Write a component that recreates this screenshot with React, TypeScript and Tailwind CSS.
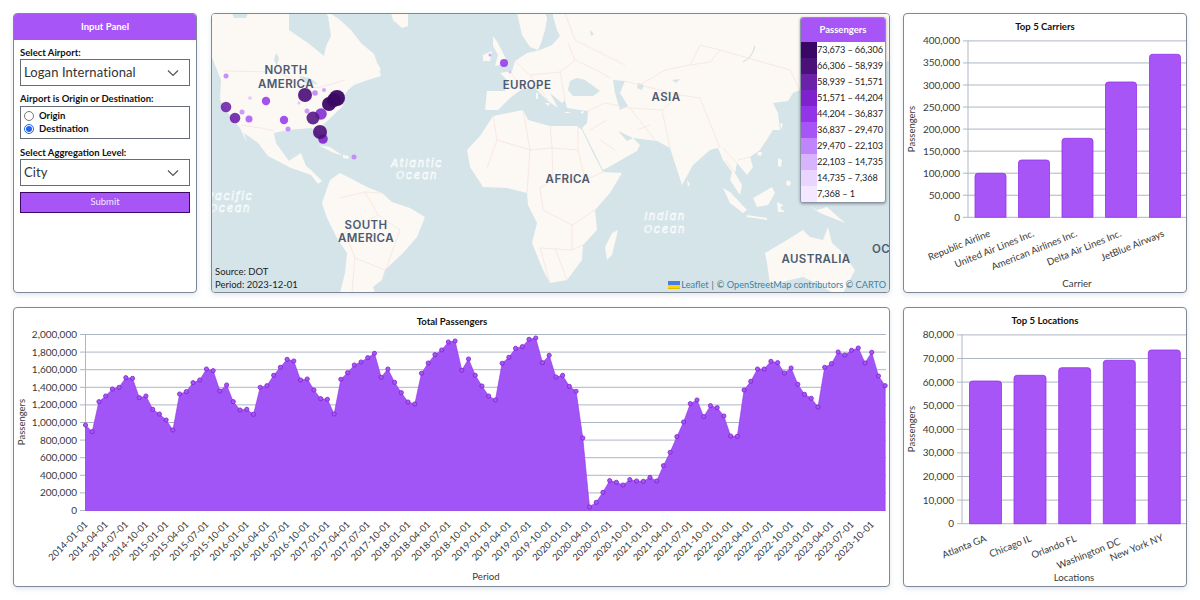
import React from 'react';

const PANEL = 'border border-[#7f8896] rounded-[4px] bg-white shadow-[0_2px_5px_rgba(120,140,170,0.22)] overflow-hidden';
const AXIS_TEXT = '#3a3a3a';
const GRID = '#aeb6c4';

// y position of each month, read off the plot (2014-01 .. 2023-12), in 1/3 px below y=300
const totalTrace = [
  375, 395, 305, 288, 267, 262, 233, 235, 293, 288, 328, 342,
  360, 390, 282, 275, 248, 240, 207, 212, 273, 255, 305, 330,
  328, 343, 262, 257, 226, 202, 178, 183, 240, 237, 270, 296,
  298, 342, 238, 218, 195, 186, 173, 160, 232, 207, 247, 278,
  306, 312, 220, 189, 164, 150, 126, 123, 211, 177, 226, 258,
  288, 300, 190, 172, 145, 140, 118, 114, 188, 166, 231, 226,
  259, 274, 414, 621, 607, 577, 542, 547, 555, 539, 543, 544,
  532, 543, 497, 457, 410, 366, 311, 300, 350, 317, 323, 348,
  408, 409, 270, 244, 207, 207, 184, 188, 219, 204, 253, 283,
  295, 321, 202, 191, 156, 165, 151, 144, 189, 157, 228, 257,
];

const legend = [
  ['#3b0764', '73,673 – 66,306'],
  ['#4c1079', '66,306 – 58,939'],
  ['#6b21a8', '58,939 – 51,571'],
  ['#7e22ce', '51,571 – 44,204'],
  ['#9333ea', '44,204 – 36,837'],
  ['#a855f7', '36,837 – 29,470'],
  ['#c084fc', '29,470 – 22,103'],
  ['#d8b4fe', '22,103 – 14,735'],
  ['#e9d5ff', '14,735 – 7,368'],
  ['#f3e8ff', '7,368 – 1'],
];

const bubbles: [number, number, number, string, number][] = [
  [226, 76, 2.5, '#c084fc', 0.9],
  [250, 98, 1.8, '#d8b4fe', 0.7],
  [299, 103, 1.5, '#d8b4fe', 0.7],
  [242, 112, 2.5, '#c084fc', 0.8],
  [249, 119, 3.5, '#a855f7', 0.85],
  [266, 101, 4.2, '#9333ea', 0.85],
  [284, 120, 4.2, '#9333ea', 0.85],
  [288, 129, 2.5, '#c084fc', 0.9],
  [307, 111, 2.5, '#c084fc', 0.8],
  [315, 93, 2.8, '#c084fc', 0.9],
  [324, 90, 2, '#c084fc', 0.7],
  [226, 107, 5.3, '#6b21a8', 0.88],
  [235, 118, 5.3, '#6b21a8', 0.9],
  [321, 114, 5.8, '#7e22ce', 0.85],
  [323, 139, 4.8, '#7e22ce', 0.9],
  [354, 157, 2.5, '#c084fc', 0.9],
  [313, 118, 6.5, '#581c87', 0.92],
  [320, 132, 7, '#4c1079', 0.92],
  [305, 95, 7, '#4c1079', 0.92],
  [329, 104, 7, '#3b0764', 0.95],
  [334, 100, 7, '#3b0764', 0.95],
  [337, 98, 8, '#3b0764', 0.95],
  [504, 63, 4, '#9333ea', 0.85],
  [490, 55, 1.5, '#c084fc', 0.7],
  [510, 72, 1.5, '#d8b4fe', 0.8],
];

const land = [
  // north and central america
  '211,13 330,13 340,20 351,30 361,43 374,54 379,68 381,76 368,80 354,85 348,90 341,100 343,106 323,125 326,138 323,141 316,130 311,128 288,130 274,133 276,143 289,161 301,153 306,166 311,170 322,181 318,184 311,175 291,168 268,156 258,143 244,133 247,143 240,128 228,113 220,100 221,80 211,55',
  // south america
  '340,173 330,180 322,203 327,218 338,240 347,253 345,273 340,293 375,293 373,287 382,280 385,270 403,253 417,237 425,217 410,208 392,202 382,193 367,187 350,178',
  // africa
  '467,150 480,136 493,116 523,110 528,120 550,126 577,126 582,130 593,153 603,172 622,173 610,193 595,210 597,230 583,245 582,260 567,280 550,283 543,270 532,243 537,223 528,205 527,193 507,188 483,187 470,167',
  // eurasia
  '553,13 553,16 557,30 560,36 552,45 540,50 527,53 515,61 512,71 500,73 508,81 505,91 487,91 485,110 498,110 510,98 522,89 535,88 548,101 558,108 550,93 562,103 565,100 567,108 580,110 588,111 587,123 582,128 603,170 607,168 637,151 640,145 633,138 627,141 618,131 633,138 657,141 670,148 682,185 693,165 710,150 718,148 723,160 732,172 730,180 740,195 742,185 735,173 737,163 747,175 753,167 750,157 760,150 773,130 780,130 778,113 773,103 788,101 793,93 800,90 830,90 890,60 890,13',
  // scandinavia
  '517,13 522,35 530,47 538,50 545,35 548,20 545,13',
  // uk + ireland
  '493,36 498,43 503,53 508,63 495,66 498,55 493,46',
  '483,55 492,51 490,61 483,61',
  // greenland, newfoundland
  '391,13 408,13 408,26 402,28 393,20',
  '372,66 378,64 381,70 375,72',
  // cuba + hispaniola
  '318,145 330,147 343,156 334,153',
  '343,155 349,156 348,159 343,158',
  // madagascar
  '618,230 612,233 605,247 607,260 612,255',
  // mediterranean islands
  '536,93 538,93 538,99 536,99',
  '545,103 550,103 548,106',
  '565,112 570,112 570,113 565,113',
  '580,112 584,111 583,114',
  // taiwan, hainan
  '780,123 783,124 781,130',
  '758,152 762,152 761,156 757,155',
  // sri lanka, sumatra, java, borneo, sulawesi, philippines
  '687,180 690,184 688,187',
  '723,188 730,192 747,210 743,213 730,203',
  '747,215 767,218 767,220 747,217',
  '753,198 772,187 775,193 768,205 757,207',
  '777,202 783,205 780,208 785,212 778,212',
  '778,158 782,160 781,167 778,166',
  '787,180 791,182 790,186 786,185',
  // new guinea + australia
  '808,205 817,210 827,207 845,223 830,217 820,213',
  '765,253 767,263 770,285 790,280 803,277 820,285 833,293 843,293 855,270 840,250 832,243 828,227 823,240 810,237 803,230 787,240',
];

const water = [
  '289,13 289,30 308,43 324,56 326,46 331,36 328,16 325,13',
  '570,81 577,78 585,80 600,91 593,96 573,96 568,90',
  '613,80 625,81 620,93 628,106 620,110 615,93',
  '638,83 644,85 642,90 637,88',
  '548,13 553,13 553,30 545,42 540,47 545,30',
  '232,13 248,13 246,18 234,18',
  '276,53 279,58 277,66 274,60',
  '299,76 310,78 318,84 305,83',
  '590,30 594,34 591,36',
  '672,80 680,79 676,83',
];

const borders = [
  'M224 71L278 72L300 84L318 88L345 80',
  'M241 125L261 128L274 131',
  'M289 161L295 155L300 153',
  'M340 198L365 192L378 215L345 232L338 240',
  'M365 192L382 193M378 215L400 230L382 280M345 232L355 258L352 293M355 258L385 270',
  'M493 116L497 140L487 168M497 140L530 150L527 193M530 150L523 110M530 150L552 148L550 126M552 148L578 150L578 126',
  'M552 148L553 180L540 188L543 210L572 225L595 210M578 150L585 180L553 180M585 180L603 172M572 225L572 250L540 248M572 250L583 245M540 248L550 283M555 248L567 280',
  'M510 71L520 85L535 88M515 61L530 75L560 72L575 60L568 43M530 75L548 100M560 72L565 100M575 60L600 72L610 78',
  'M588 111L605 103L630 108L655 140M630 108L662 110L670 148M662 110L680 95L700 98L720 148M680 95L640 85L625 81M640 85L665 70L690 65L710 62L720 50L790 70L800 90M720 50L700 45L690 65',
  'M725 160L735 173M738 160L750 157M723 148L737 163',
  'M565 13L575 40M575 40L605 55L625 65',
  'M607 120L590 130M615 150L600 140M637 130L650 125',
];

const totalTicks = Array.from({ length: 40 }, (_, i) => {
  const year = 2014 + Math.floor(i / 4);
  const month = ['01', '04', '07', '10'][i % 4];
  return `${year}-${month}-01`;
});

const fmt = (n: number) => n.toLocaleString('en-US');

const Chevron: React.FC = () => (
  <svg className="absolute right-[11px] top-1/2 -translate-y-1/2 pointer-events-none" width="12" height="7" viewBox="0 0 12 7" fill="none">
    <path d="M1 1l5 5 5-5" stroke="#555" strokeWidth="1.2" />
  </svg>
);

const Select: React.FC<{ value: string }> = ({ value }) => (
  <div className="relative">
    <select
      defaultValue={value}
      className="appearance-none block w-full h-[27px] border border-[#666d78] bg-white rounded-none pl-[3px] text-[13px] font-normal tracking-[0.1px] text-[#333] outline-none"
    >
      <option>{value}</option>
    </select>
    <Chevron />
  </div>
);

const InputPanel: React.FC = () => (
  <div className={`${PANEL} w-[184px] shrink-0 mr-px flex flex-col`}>
    <div className="h-[26px] bg-[#a855f7] flex items-center justify-center text-white text-[9.5px] font-bold">Input Panel</div>
    <div className="px-[6px] pt-[6px] text-[9.5px] font-bold text-[#111] flex flex-col">
      <label className="leading-[13px]">Select Airport:</label>
      <Select value="Logan International" />
      <label className="leading-[13px] mt-[6px] mb-px">Airport is Origin or Destination:</label>
      <div className="border border-[#666d78] h-[33px] pl-[3px] flex flex-col justify-center">
        <label className="flex items-center gap-[5px] h-[13px]">
          <input type="radio" name="od" readOnly className="m-0 w-[10px] h-[10px] accent-[#2563eb]" />
          Origin
        </label>
        <label className="flex items-center gap-[5px] h-[13px]">
          <input type="radio" name="od" defaultChecked className="m-0 w-[10px] h-[10px] accent-[#2563eb]" />
          Destination
        </label>
      </div>
      <label className="leading-[13px] mt-[7px]">Select Aggregation Level:</label>
      <Select value="City" />
      <button className="mt-[6px] h-[21px] bg-[#a855f7] border border-[#3b0764] text-[#f3e8ff] text-[9.5px] font-normal">Submit</button>
    </div>
  </div>
);

const MapLabel: React.FC<{ x: number; y: number; children: string; anchor?: 'middle' | 'start' }> = ({ x, y, children, anchor = 'middle' }) => (
  <text x={x} y={y} textAnchor={anchor} fontFamily="Inter, sans-serif" fontWeight={600} fontSize={11.5} letterSpacing={0.4} fill="#4c5b70">
    {children}
  </text>
);

const OceanLabel: React.FC<{ x: number; y: number; children: string }> = ({ x, y, children }) => (
  <text
    x={x}
    y={y}
    textAnchor="middle"
    fontFamily="Inter, sans-serif"
    fontStyle="italic"
    fontSize={11}
    letterSpacing={1.6}
    fill="#cfe0e5"
    stroke="#ffffff"
    strokeWidth={0.6}
  >
    {children}
  </text>
);

const MapPanel: React.FC = () => (
  <div className={`${PANEL} relative flex-1`}>
    <svg className="block w-full h-full" viewBox="212 14 677 278">
      <rect x="200" y="0" width="700" height="300" fill="#d4e4e9" />
      {land.map((pts, i) => (
        <polygon key={i} points={pts} fill="#fcf8f4" strokeLinejoin="round" />
      ))}
      {water.map((pts, i) => (
        <polygon key={i} points={pts} fill="#d4e4e9" />
      ))}
      <path d="M743 62Q752 58 755 46" fill="none" stroke="#c9e0d8" strokeWidth="1" />
      {borders.map((d, i) => (
        <path key={i} d={d} fill="none" stroke="#f3e2da" strokeWidth="0.7" />
      ))}
      <MapLabel x={286} y={74}>NORTH</MapLabel>
      <MapLabel x={286} y={88}>AMERICA</MapLabel>
      <MapLabel x={527} y={89}>EUROPE</MapLabel>
      <MapLabel x={666} y={101}>ASIA</MapLabel>
      <MapLabel x={568} y={183}>AFRICA</MapLabel>
      <MapLabel x={366} y={229}>SOUTH</MapLabel>
      <MapLabel x={366} y={242}>AMERICA</MapLabel>
      <MapLabel x={816} y={263}>AUSTRALIA</MapLabel>
      <MapLabel x={872} y={253} anchor="start">OC</MapLabel>
      <OceanLabel x={417} y={167}>Atlantic</OceanLabel>
      <OceanLabel x={417} y={179}>Ocean</OceanLabel>
      <OceanLabel x={665} y={220}>Indian</OceanLabel>
      <OceanLabel x={665} y={233}>Ocean</OceanLabel>
      <OceanLabel x={230} y={200}>Pacific</OceanLabel>
      <OceanLabel x={230} y={212}>Ocean</OceanLabel>
      {bubbles.map(([cx, cy, r, fill, opacity], i) => (
        <circle key={i} cx={cx} cy={cy} r={r} fill={fill} fillOpacity={opacity} />
      ))}
    </svg>

    {/* Legend */}
    <div className="absolute top-[3px] right-[3px] w-[86px] border border-[#8b95a5] rounded-[3px] bg-white overflow-hidden shadow-[0_1px_3px_rgba(0,0,0,0.35)]">
      <div className="h-[24px] bg-[#a855f7] flex items-center justify-center text-white text-[9.5px] font-bold">Passengers</div>
      {legend.map(([color, label]) => (
        <div key={label} className="flex items-center h-[16px]">
          <span className="w-[16px] h-full shrink-0" style={{ backgroundColor: color }} />
          <span className="text-[9.2px] tracking-[-0.1px] text-[#222] whitespace-nowrap">{label}</span>
        </div>
      ))}
    </div>

    <div className="absolute left-[3px] bottom-[1px] text-[9.5px] leading-[13px] text-[#222]">
      <div>Source: DOT</div>
      <div>Period: 2023-12-01</div>
    </div>

    <div className="absolute right-[3px] bottom-[1px] flex items-center text-[9.2px] leading-[13px] text-[#4a6a78]">
      <svg className="mr-[1px]" width="12" height="8" viewBox="0 0 12 8">
        <rect width="12" height="4" fill="#4C7BE1" />
        <rect y="4" width="12" height="3" fill="#FFD500" />
        <rect y="7" width="12" height="1" fill="#E0BC00" />
      </svg>
      <span className="text-[#3b83a3]">Leaflet</span>
      <span className="mx-[3px]">|</span>
      <span>
        © <span className="text-[#3b83a3]">OpenStreetMap</span> <span className="text-[#3b83a3]">contributors</span> © <span className="text-[#3b83a3]">CARTO</span>
      </span>
    </div>
  </div>
);

type BarChartProps = {
  box: [number, number, number, number];
  title: string;
  titleX: number;
  titleY: number;
  axisX: number;
  zeroY: number;
  step: number;
  ticks: number[];
  bars: { name: string; x: number; w: number; top: number; endX: number; endY: number }[];
  yLabelY: number;
  xLabel: string;
  xLabelX: number;
  xLabelY: number;
};

const BarChart: React.FC<BarChartProps> = ({ box, title, titleX, titleY, axisX, zeroY, step, ticks, bars, yLabelY, xLabel, xLabelX, xLabelY }) => (
  <div className={`${PANEL} w-[284px] shrink-0`}>
    <svg className="block w-full h-full" viewBox={box.join(' ')} fontFamily="Lato, sans-serif">
      <text x={titleX} y={titleY} textAnchor="middle" fontSize={9.6} fontWeight={700} fill="#111">{title}</text>
      {ticks.map((t, i) => {
        const y = zeroY - step * i;
        return (
          <g key={t}>
            <line x1={axisX - 5} x2={1186} y1={y} y2={y} stroke={GRID} strokeWidth="1" />
            <text x={axisX - 8} y={y + 3.5} textAnchor="end" fontSize={10} fill={AXIS_TEXT}>{fmt(t)}</text>
          </g>
        );
      })}
      <line x1={axisX} x2={axisX} y1={zeroY - step * (ticks.length - 1)} y2={zeroY} stroke={GRID} />
      {bars.map((b) => (
        <g key={b.name}>
          <path
            d={`M${b.x} ${zeroY}V${b.top + 3}Q${b.x} ${b.top} ${b.x + 3} ${b.top}H${b.x + b.w - 3}Q${b.x + b.w} ${b.top} ${b.x + b.w} ${b.top + 3}V${zeroY}Z`}
            fill="#a855f7"
            stroke="#9333ea"
            strokeWidth="0.8"
          />
          <text x={b.endX} y={b.endY} textAnchor="end" fontSize={9.7} fill={AXIS_TEXT} transform={`rotate(-22 ${b.endX} ${b.endY})`}>{b.name}</text>
        </g>
      ))}
      <text x={915} y={yLabelY} textAnchor="middle" fontSize={9.5} fill={AXIS_TEXT} transform={`rotate(-90 915 ${yLabelY})`}>Passengers</text>
      <text x={xLabelX} y={xLabelY} textAnchor="middle" fontSize={9.7} fill={AXIS_TEXT}>{xLabel}</text>
    </svg>
  </div>
);

const TotalChart: React.FC = () => {
  const axisX = 85.5;
  const dx = 6.72;
  const zeroY = 510.5;
  const points = totalTrace.map((v, i) => [axisX + i * dx, 300 + v / 3]);
  const line = points.map(([x, y]) => `${x.toFixed(1)} ${y.toFixed(1)}`).join('L');
  return (
    <div className={`${PANEL} flex-1`}>
      <svg className="block w-full h-full" viewBox="14 308 875 278" fontFamily="Lato, sans-serif">
        <text x={452} y={325} textAnchor="middle" fontSize={9.6} fontWeight={700} fill="#111">Total Passengers</text>
        {Array.from({ length: 11 }, (_, i) => {
          const y = zeroY - 17.6 * i;
          return (
            <g key={i}>
              <line x1={80} x2={886} y1={y} y2={y} stroke={GRID} strokeWidth="1" />
              <text x={77} y={y + 3.5} textAnchor="end" fontSize={10} fill={AXIS_TEXT}>{fmt(i * 200000)}</text>
            </g>
          );
        })}
        <line x1={axisX} x2={axisX} y1={334.5} y2={zeroY} stroke={GRID} />
        <path d={`M${axisX} ${zeroY}L${line}L${points[119][0]} ${zeroY}Z`} fill="#a155f6" stroke="#9333ea" strokeWidth="0.6" />
        {points.map(([x, y], i) => (
          <circle key={i} cx={x} cy={y} r="2.1" fill="#a855f7" stroke="#7e22ce" strokeWidth="0.8" />
        ))}
        {totalTicks.map((label, i) => {
          const x = axisX + i * 3 * dx + 3;
          return (
            <text key={label} x={x} y={525} textAnchor="end" fontSize={9.5} fill={AXIS_TEXT} transform={`rotate(-45 ${x} 525)`}>{label}</text>
          );
        })}
        <text x={25} y={422} textAnchor="middle" fontSize={9.5} fill={AXIS_TEXT} transform="rotate(-90 25 422)">Passengers</text>
        <text x={486} y={580} textAnchor="middle" fontSize={9.7} fill={AXIS_TEXT}>Period</text>
      </svg>
    </div>
  );
};

const App: React.FC = () => (
  <div className="w-[1200px] h-[600px] bg-white p-[13px] flex flex-col gap-[14px] font-[Lato,sans-serif]">
    <div className="h-[280px] flex gap-[13px]">
      <InputPanel />
      <MapPanel />
      <BarChart
        box={[904, 14, 282, 278]}
        title="Top 5 Carriers"
        titleX={1045}
        titleY={30}
        axisX={968}
        zeroY={217.3}
        step={22.05}
        ticks={[0, 50000, 100000, 150000, 200000, 250000, 300000, 350000, 400000]}
        bars={[
          { name: 'Republic Airline', x: 975, w: 31, top: 173.3, endX: 991, endY: 236 },
          { name: 'United Air Lines Inc.', x: 1018.5, w: 31, top: 160, endX: 1035, endY: 236 },
          { name: 'American Airlines Inc.', x: 1062, w: 31, top: 138.3, endX: 1078, endY: 236 },
          { name: 'Delta Air Lines Inc.', x: 1105.5, w: 31, top: 82, endX: 1122, endY: 236 },
          { name: 'JetBlue Airways', x: 1149.5, w: 31, top: 54.3, endX: 1165, endY: 236 },
        ]}
        yLabelY={129}
        xLabel="Carrier"
        xLabelX={1077}
        xLabelY={287}
      />
    </div>
    <div className="h-[280px] flex gap-[13px]">
      <TotalChart />
      <BarChart
        box={[904, 308, 282, 278]}
        title="Top 5 Locations"
        titleX={1045}
        titleY={324}
        axisX={962}
        zeroY={523.7}
        step={23.6}
        ticks={[0, 10000, 20000, 30000, 40000, 50000, 60000, 70000, 80000]}
        bars={[
          { name: 'Atlanta GA', x: 969.5, w: 32, top: 381, endX: 987, endY: 541 },
          { name: 'Chicago IL', x: 1014, w: 32, top: 375.3, endX: 1032, endY: 541 },
          { name: 'Orlando FL', x: 1058.7, w: 32, top: 367.7, endX: 1077, endY: 541 },
          { name: 'Washington DC', x: 1103.3, w: 32, top: 360.3, endX: 1121, endY: 544 },
          { name: 'New York NY', x: 1148.3, w: 32, top: 350, endX: 1164, endY: 540 },
        ]}
        yLabelY={429}
        xLabel="Locations"
        xLabelX={1074}
        xLabelY={581}
      />
    </div>
  </div>
);

export default App;
